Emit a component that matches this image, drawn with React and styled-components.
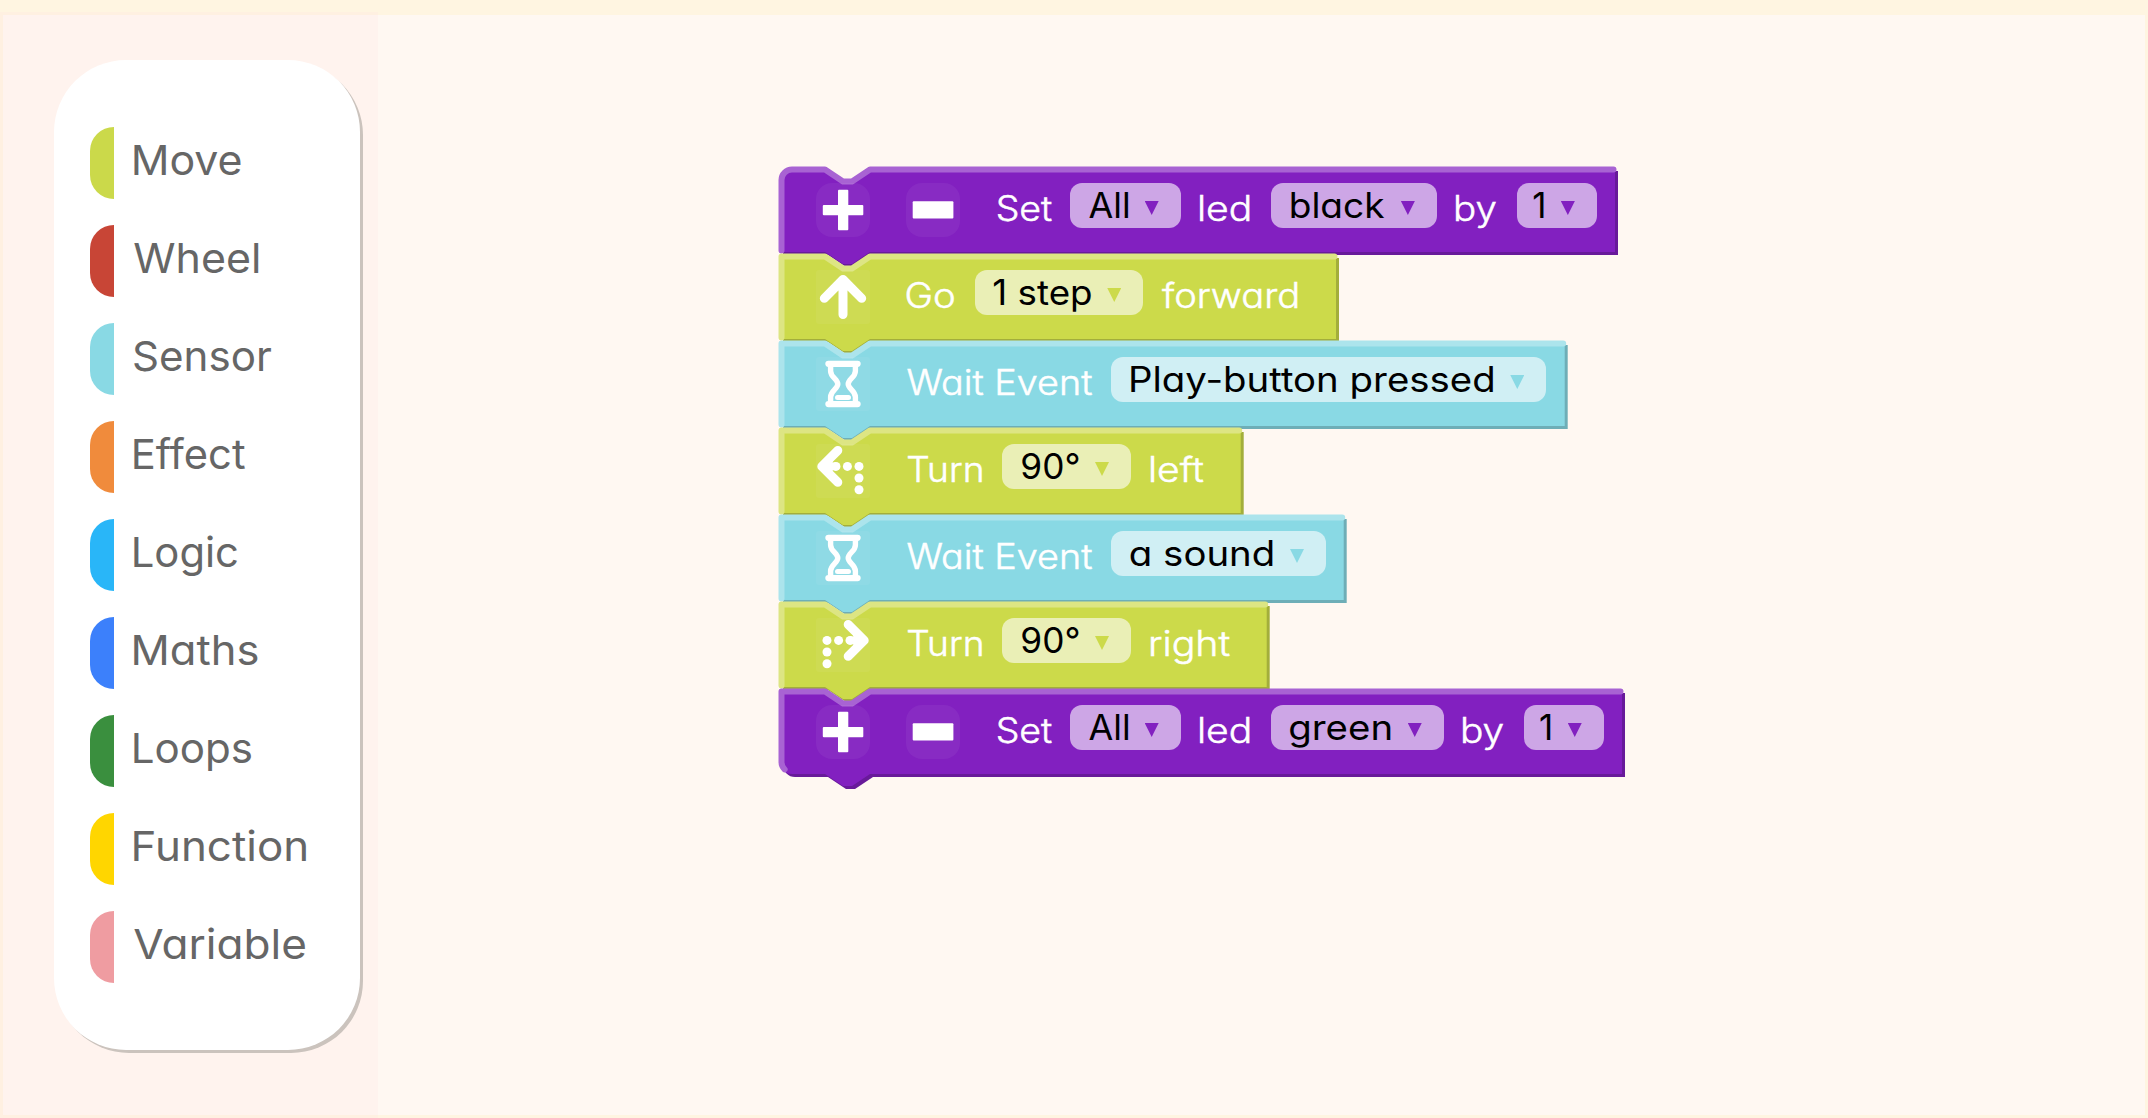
import React, { useLayoutEffect, useRef, useState } from "react";
import styled, { createGlobalStyle } from "styled-components";

const GlobalStyle = createGlobalStyle`
  * { box-sizing: border-box; }
  body {
    margin: 0;
    background: #fff5e1;
    font-family: Inter, "Liberation Sans", sans-serif;
    font-feature-settings: "cv11" 1;
  }
`;

const PALETTE = {
  purple: { body: "#8220c0", light: "#a863d3", dark: "#681a9a", field: "#cda6e6", round: 16 },
  lime: { body: "#ccda4a", light: "#dde583", dark: "#a3ae3b", field: "#eaefb6", round: 3 },
  cyan: { body: "#89d9e4", light: "#ace4ec", dark: "#6eaeb7", field: "#d0eff4", round: 3 },
};

/* ---------- text set to an exact width ---------- */

const FitBox = styled.span`
  display: block;
  flex: none;
  width: ${(p) => p.$width}px;
  white-space: pre;
`;

const FitInner = styled.span`
  display: inline-block;
  transform-origin: 0 50%;
`;

/* Bearings are measured on an enlarged font, as canvas rounds them to whole pixels. */
const MEASURE_ZOOM = 10;

function FitText({ width, children }) {
  const ref = useRef(null);
  const [fit, setFit] = useState({ scale: 1, shift: 0 });
  useLayoutEffect(() => {
    const el = ref.current;
    const style = getComputedStyle(el);
    const ctx = document.createElement("canvas").getContext("2d");
    ctx.font = `${style.fontWeight} ${parseFloat(style.fontSize) * MEASURE_ZOOM}px ${style.fontFamily}`;
    const first = ctx.measureText(children[0]);
    const last = ctx.measureText(children[children.length - 1]);
    const lead = -first.actualBoundingBoxLeft / MEASURE_ZOOM;
    const trail = (last.width - last.actualBoundingBoxRight) / MEASURE_ZOOM;
    const ink = el.offsetWidth - lead - trail;
    const scale = children.length > 1 ? width / ink : 1;
    setFit({ scale, shift: -lead * scale });
  }, [children, width]);
  return (
    <FitBox $width={width}>
      <FitInner
        ref={ref}
        style={{ transform: `translateX(${fit.shift}px) scaleX(${fit.scale})` }}
      >
        {children}
      </FitInner>
    </FitBox>
  );
}

/* ---------- page ---------- */

const Page = styled.div`
  height: 1118px;
  padding-top: 12px;
  overflow: hidden;
  background: #fff5e1;
`;

const Workspace = styled.main`
  display: flex;
  height: 1106px;
  border: 3px solid #fff5e1;
  background: #fff8f2;
`;

const Sidebar = styled.aside`
  flex: none;
  width: 378px;
  height: 1106px;
  margin: -3px 0 0 -3px;
  padding: 48px 18px 68px 54px;
  background: rgba(255, 228, 226, 0.25);
`;

const Panel = styled.nav`
  display: flex;
  flex-direction: column;
  gap: 26px;
  width: 306px;
  height: 990px;
  padding: 67px 36px;
  border-radius: 72px;
  background: #fff;
  box-shadow: 3px 3px 0 #cbc3bd;
`;

const Category = styled.div`
  display: flex;
  gap: 20px;
  height: 72px;
  font-size: 41px;
  line-height: 66px;
  color: #666;
`;

const Tab = styled.span`
  flex: none;
  width: 24px;
  height: 72px;
  border-radius: 24px 0 0 24px;
  background: ${(p) => p.$color};
`;

const Canvas = styled.section`
  flex: 1;
  padding: 153px 0 0 402px;
`;

/* ---------- blocks ---------- */

const BlockBox = styled.div`
  display: grid;
  width: ${(p) => p.$width}px;
  height: 87px;
`;

const Shape = styled.svg`
  grid-area: 1 / 1;
  display: block;
  overflow: visible;
`;

const BlockRow = styled.div`
  grid-area: 1 / 1;
  position: relative;
  display: flex;
  align-items: flex-start;
  padding-top: 15px;
  font-size: 35px;
  line-height: 45px;
`;

const Label = styled.div`
  margin-left: ${(p) => p.$gap}px;
  padding-top: 3px;
  font-weight: 300;
  -webkit-text-stroke: 0.5px #fff;
  color: #fff;
`;

const Dropdown = styled.div`
  display: flex;
  flex: none;
  width: ${(p) => p.$width}px;
  height: 45px;
  margin-left: ${(p) => p.$gap}px;
  padding: 0 22px 0 ${(p) => p.$inset}px;
  justify-content: space-between;
  border-radius: 12px;
  background: ${(p) => p.$color};
  color: #000;
`;

const Arrow = styled.span`
  width: 14px;
  height: 14px;
  margin-top: 18px;
  background: ${(p) => p.$color};
  clip-path: polygon(0 0, 100% 0, 50% 100%);
`;

const IconTile = styled.div`
  flex: none;
  width: 54px;
  height: 54px;
  margin-left: 36px;
  border-radius: ${(p) => p.$round}px;
  background: rgba(255, 255, 255, 0.05);

  svg {
    display: block;
    overflow: visible;
  }
`;

const Svg = ({ children, ...rest }) => (
  <svg width="54" height="54" viewBox="0 0 54 54" {...rest}>
    {children}
  </svg>
);

const TurnArrow = () => (
  <>
    <path
      d="M21.8 6.5 L5.8 22.4 L21.8 38.3"
      fill="none"
      stroke="#fff"
      strokeWidth="9"
      strokeLinecap="round"
      strokeLinejoin="round"
    />
    <path d="M6 22.4 L18 13 L16.5 18.5 L20 18.2 L20 26.6 L16.5 26.3 L18 32 Z" fill="#fff" />
    {[[20, 22.4], [31.4, 22.4], [43, 22.4], [43, 34], [43, 45.7]].map(([x, y]) => (
      <circle key={`${x}-${y}`} cx={x} cy={y} r="4.5" fill="#fff" />
    ))}
  </>
);

const ICONS = {
  plus: (
    <Svg fill="#fff">
      <rect x="22" y="6.8" width="10.3" height="40.5" rx="1" />
      <rect x="6.8" y="22" width="40.5" height="10.2" rx="1" />
    </Svg>
  ),
  minus: (
    <Svg fill="#fff">
      <rect x="6.7" y="18.3" width="40.7" height="17.3" rx="1" />
    </Svg>
  ),
  up: (
    <Svg fill="none" stroke="#fff" strokeWidth="9" strokeLinecap="round" strokeLinejoin="round">
      <path d="M27 11 V44.5 M8.3 28.3 L27 9.5 L45.7 28.3" />
    </Svg>
  ),
  hourglass: (
    <Svg fill="none" stroke="#fff" strokeLinecap="round">
      <path d="M12.4 6.8 H41.6 M12.4 47.1 H41.6" strokeWidth="6.2" />
      <path
        d="M14.6 7 V14 C14.6 20.5 21.8 22 21.8 27 C21.8 32 14.6 33.5 14.6 40 V47 M39.4 7 V14 C39.4 20.5 32.2 22 32.2 27 C32.2 32 39.4 33.5 39.4 40 V47"
        strokeWidth="5.4"
      />
      <path d="M21.5 40.4 H32.5" strokeWidth="5" />
    </Svg>
  ),
  left: (
    <Svg>
      <TurnArrow />
    </Svg>
  ),
  right: (
    <Svg>
      <g transform="matrix(-1 0 0 1 54 0)">
        <TurnArrow />
      </g>
    </Svg>
  ),
};

function bodyPath(w, first, last) {
  const top = first ? "M0 12 A12 12 0 0 1 12 0" : "M0 0";
  const bottom = last ? "H12 A12 12 0 0 1 0 72" : "H0";
  return `${top} H45 l18 12 h9 l18 -12 H${w} V84 H90 l-18 12 h-9 l-18 -12 ${bottom} Z`;
}

function lightPath(w, first, last) {
  const start = last ? "M4.6 79.4 A10.5 10.5 0 0 1 1.5 72" : "M1.5 82.5";
  const corner = first ? "V12 A10.5 10.5 0 0 1 12 1.5" : "V1.5";
  return `${start} ${corner} H45 l18 12 h9 l18 -12 H${w - 1.5}`;
}

function Block({ tone, width, first, last, parts }) {
  const c = PALETTE[tone];
  return (
    <BlockBox $width={width}>
      <Shape width={width} height="87">
        <path d={bodyPath(width, first, last)} fill={c.dark} transform="translate(3 3)" />
        <path d={bodyPath(width, first, last)} fill={c.body} />
        <path
          d={lightPath(width, first, last)}
          fill="none"
          stroke={c.light}
          strokeWidth="6"
          strokeLinecap="round"
          strokeLinejoin="round"
        />
      </Shape>
      <BlockRow>
        {parts.map((part, i) => {
          if (part.icon) {
            return (
              <IconTile key={i} $round={c.round}>
                {ICONS[part.icon]}
              </IconTile>
            );
          }
          if (part.label) {
            return (
              <Label key={i} $gap={part.gap}>
                <FitText width={part.ink}>{part.label}</FitText>
              </Label>
            );
          }
          return (
            <Dropdown
              key={i}
              $width={part.width}
              $gap={part.gap}
              $inset={part.inset}
              $color={c.field}
            >
              <FitText width={part.ink}>{part.value}</FitText>
              <Arrow $color={c.body} />
            </Dropdown>
          );
        })}
      </BlockRow>
    </BlockBox>
  );
}

/* ---------- data ---------- */

const CATEGORIES = [
  ["Move", "#cbd94a", 107],
  ["Wheel", "#c84536", 124],
  ["Sensor", "#89d9e4", 137],
  ["Effect", "#f08b3c", 111],
  ["Logic", "#29b6f8", 103],
  ["Maths", "#3c80fb", 123],
  ["Loops", "#3a8f3e", 117],
  ["Function", "#ffd600", 172],
  ["Variable", "#ef9ca1", 171],
];

const SET_ALL_LED = [
  { icon: "plus" },
  { icon: "minus" },
  { label: "Set", gap: 37.7, ink: 53.8 },
  { value: "All", gap: 18.5, width: 110.7, inset: 18.7, ink: 39 },
  { label: "led", gap: 19.5, ink: 50 },
];

const BLOCKS = [
  {
    tone: "purple",
    width: 835,
    parts: [
      ...SET_ALL_LED,
      { value: "black", gap: 21, width: 165.7, inset: 19.5, ink: 94 },
      { label: "by", gap: 19.3, ink: 40 },
      { value: "1", gap: 20.7, width: 80, inset: 17, ink: 6.3 },
    ],
  },
  {
    tone: "lime",
    width: 556,
    parts: [
      { icon: "up" },
      { label: "Go", gap: 37.2, ink: 47.3 },
      { value: "1 step", gap: 20.2, width: 168.6, inset: 19, ink: 97.3 },
      { label: "forward", gap: 18.4, ink: 135.6 },
    ],
  },
  {
    tone: "cyan",
    width: 784.7,
    parts: [
      { icon: "hourglass" },
      { label: "Wait Event", gap: 37, ink: 185.3 },
      { value: "Play-button pressed", gap: 18.7, width: 435.3, inset: 20, ink: 362 },
    ],
  },
  {
    tone: "lime",
    width: 460.7,
    parts: [
      { icon: "left" },
      { label: "Turn", gap: 37.7, ink: 74 },
      { value: "90°", gap: 20.3, width: 129, inset: 20.3, ink: 57 },
      { label: "left", gap: 20, ink: 52 },
    ],
  },
  {
    tone: "cyan",
    width: 563.7,
    parts: [
      { icon: "hourglass" },
      { label: "Wait Event", gap: 37, ink: 185.3 },
      { value: "a sound", gap: 18.7, width: 215, inset: 19, ink: 143.3 },
    ],
  },
  {
    tone: "lime",
    width: 486.7,
    parts: [
      { icon: "right" },
      { label: "Turn", gap: 37.7, ink: 74 },
      { value: "90°", gap: 20.3, width: 129, inset: 20.3, ink: 57 },
      { label: "right", gap: 20, ink: 78.3 },
    ],
  },
  {
    tone: "purple",
    width: 842,
    parts: [
      ...SET_ALL_LED,
      { value: "green", gap: 21, width: 172.6, inset: 18.8, ink: 100.7 },
      { label: "by", gap: 19.3, ink: 40.4 },
      { value: "1", gap: 20.3, width: 80, inset: 17, ink: 6.3 },
    ],
  },
];

export default function App() {
  return (
    <>
      <GlobalStyle />
      <Page>
        <Workspace>
          <Sidebar>
            <Panel>
              {CATEGORIES.map(([name, color, ink]) => (
                <Category key={name}>
                  <Tab $color={color} />
                  <FitText width={ink}>{name}</FitText>
                </Category>
              ))}
            </Panel>
          </Sidebar>
          <Canvas>
            {BLOCKS.map((block, i) => (
              <Block key={i} {...block} first={i === 0} last={i === BLOCKS.length - 1} />
            ))}
          </Canvas>
        </Workspace>
      </Page>
    </>
  );
}
